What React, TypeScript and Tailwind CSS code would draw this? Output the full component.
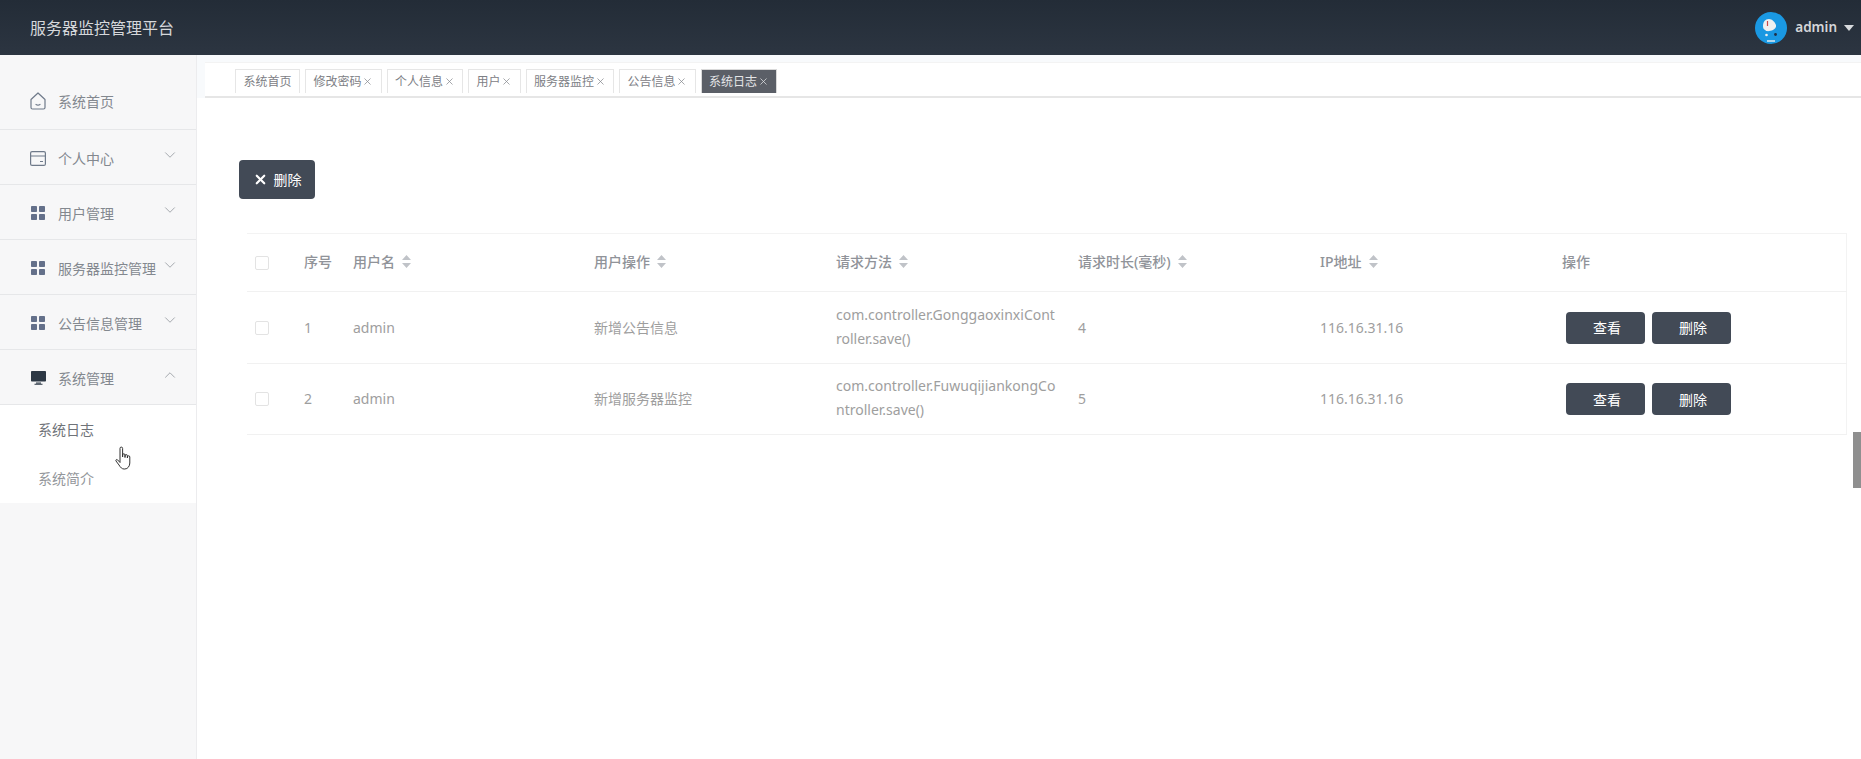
import React from 'react';
import { ChevronDown, ChevronUp, X } from 'lucide-react';

const TABS = [
  { label: '系统首页', closable: false },
  { label: '修改密码', closable: true },
  { label: '个人信息', closable: true },
  { label: '用户', closable: true },
  { label: '服务器监控', closable: true },
  { label: '公告信息', closable: true },
  { label: '系统日志', closable: true, active: true },
];

const ROWS = [
  { id: 1, user: 'admin', op: '新增公告信息', method: 'com.controller.GonggaoxinxiController.save()', time: 4, ip: '116.16.31.16' },
  { id: 2, user: 'admin', op: '新增服务器监控', method: 'com.controller.FuwuqijiankongController.save()', time: 5, ip: '116.16.31.16' },
];

function HomeIcon() {
  return (
    <svg width="16" height="18" viewBox="0 0 16 18" fill="none" stroke="#6f7a8a" strokeWidth="1.2">
      <path d="M1 7.5 8 1l7 6.5V15.5a1.5 1.5 0 0 1-1.5 1.5h-11A1.5 1.5 0 0 1 1 15.5z" strokeLinejoin="round" />
      <path d="M6 12.5c1 .7 3 .7 4 0" strokeLinecap="round" />
    </svg>
  );
}

function CardIcon() {
  return (
    <svg width="16" height="15" viewBox="0 0 16 15" fill="none" stroke="#6f7a8a" strokeWidth="1.2">
      <rect x="0.6" y="0.6" width="14.8" height="13.8" rx="1.5" />
      <path d="M1 5h14M10 10.5h3" />
    </svg>
  );
}

function GridIcon() {
  return (
    <svg width="14" height="14" viewBox="0 0 14 14" fill="#64708a">
      <rect width="6" height="6" rx="0.8" />
      <rect x="8" width="6" height="6" rx="0.8" />
      <rect y="8" width="6" height="6" rx="0.8" />
      <rect x="8" y="8" width="6" height="6" rx="0.8" />
    </svg>
  );
}

function MonitorIcon() {
  return (
    <svg width="15" height="14" viewBox="0 0 15 14" fill="#2d3845">
      <rect width="15" height="10.5" rx="0.8" />
      <path d="M5 11.5h5v1H5zM3.5 12.8h8v1h-8z" />
    </svg>
  );
}

function SortIcon() {
  return (
    <svg width="9" height="13" viewBox="0 0 9 13" fill="#c0c3c8" className="ml-[7px] inline-block align-[-1px]">
      <path d="M4.5 0 9 5H0zM4.5 13 0 8h9z" />
    </svg>
  );
}

function Avatar() {
  return (
    <svg width="32" height="32" viewBox="0 0 32 32">
      <circle cx="16" cy="16" r="16" fill="#1a98e2" />
      <path d="M8 14c0-4 2-7 6-7 3 0 6 3 7 6 .5 2-1 4-3 5-3 1-6 2-8 0-1.500-1-2-2-2-4z" fill="#f0f0f0" />
      <path d="M12.500 9v5" stroke="#c94a4a" strokeWidth="1.2" />
      <circle cx="11.500" cy="23" r="1.300" fill="#f0f0f0" />
      <circle cx="20.500" cy="22.500" r="1.400" fill="#1f2f45" />
      <path d="M12 29h8" stroke="#f0f0f0" strokeWidth="1.400" />
    </svg>
  );
}

function MenuItem({ icon, label, chevron, first }: { icon: React.ReactNode; label: string; chevron?: 'down' | 'up'; first?: boolean }) {
  return (
    <div className={`flex h-[55px] items-center border-b border-[#e6e7e9] pl-[30px] pr-[17px] ${first ? 'pb-[2px]' : 'pt-[2px]'}`}>
      <span className="flex w-[16px] justify-center">{icon}</span>
      <span className="ml-[12px] flex-1 text-[14px] text-[#83888f]">{label}</span>
      {chevron === 'down' && <ChevronDown size={18} strokeWidth={1} className="mb-[6px] text-[#8a8f96]" />}
      {chevron === 'up' && <ChevronUp size={18} strokeWidth={1} className="mb-[6px] text-[#8a8f96]" />}
    </div>
  );
}

function Checkbox() {
  return <span className="block h-[14px] w-[14px] rounded-[2px] border border-[#e3e3e3] bg-white" />;
}

function DarkButton({ children }: { children: React.ReactNode }) {
  return (
    <button className="h-[32px] w-[79px] rounded-[4px] bg-[#424a56] pl-[3px] text-[14px] text-white">{children}</button>
  );
}

export default function App() {
  return (
    <div className="relative flex h-screen w-full flex-col overflow-hidden bg-white font-['Noto_Sans','Noto_Sans_CJK_SC',sans-serif]">
      {/* Header */}
      <header className="flex h-[55px] shrink-0 items-center justify-between bg-gradient-to-b from-[#232c37] to-[#2c3541] pl-[30px] pr-[7px]">
        <h1 className="text-[16px] font-normal text-[#d6d8db]">服务器监控管理平台</h1>
        <div className="flex items-center">
          <Avatar />
          <span className="ml-[8px] text-[13.5px] font-semibold text-[#d4d6d9]">admin</span>
          <svg width="10" height="6" viewBox="0 0 10 6" fill="#d8dadd" className="ml-[7px]">
            <path d="M0 0h10L5 6z" />
          </svg>
        </div>
      </header>

      <div className="flex min-h-0 flex-1">
        {/* Sidebar */}
        <aside className="w-[197px] shrink-0 border-r border-[#ececee] bg-[#f7f7f8] pt-[20px]">
          <MenuItem first icon={<HomeIcon />} label="系统首页" />
          <MenuItem icon={<CardIcon />} label="个人中心" chevron="down" />
          <MenuItem icon={<GridIcon />} label="用户管理" chevron="down" />
          <MenuItem icon={<GridIcon />} label="服务器监控管理" chevron="down" />
          <MenuItem icon={<GridIcon />} label="公告信息管理" chevron="down" />
          <MenuItem icon={<MonitorIcon />} label="系统管理" chevron="up" />
          <div className="bg-white text-[14px]">
            <div className="flex h-[49px] items-center pl-[38px] text-[#6f7379]">系统日志</div>
            <div className="flex h-[49px] items-center pl-[38px] text-[#93969b]">系统简介</div>
          </div>
        </aside>

        {/* Main */}
        <main className="min-w-0 flex-1">
          <div className="bg-[#f8fafc] pt-[7px]">
            <div className="ml-[8px] flex h-[36px] gap-[5px] border-b-2 border-[#e6e6e6] border-t border-t-[#f3f3f3] bg-white pl-[30px] pt-[6px]">
              {TABS.map((tab) => (
                <div
                  key={tab.label}
                  className={`flex h-[24px] items-center border border-b-0 px-[7.5px] text-[12px] ${
                    tab.active ? 'border-b border-[#d9d9d9] bg-[#5b5f67] text-[#e4e5e7]' : 'border-[#e6e6e6] bg-white text-[#7d8085]'
                  }`}
                >
                  {tab.label}
                  {tab.closable && <X size={11} strokeWidth={1.6} className={tab.active ? 'ml-[0.5px] text-[#e4e5e7]' : 'ml-[0.5px] text-[#85888d]'} />}
                </div>
              ))}
            </div>
          </div>

          <div className="pl-[42px] pt-[62px]">
            <button className="flex h-[39px] w-[76px] items-center justify-center gap-[6px] rounded-[4px] bg-[#424a56] text-[14px] text-white">
              <X size={15} strokeWidth={3.5} />
              删除
            </button>
          </div>

          <table className="ml-[50px] mt-[34px] w-[1600px] table-fixed border-collapse border-r border-t border-[#f3f3f3] text-[14px] text-[#9e9e9e]">
            <colgroup>
              <col className="w-[48px]" />
              <col className="w-[49px]" />
              <col className="w-[242px]" />
              <col className="w-[242px]" />
              <col className="w-[242px]" />
              <col className="w-[242px]" />
              <col className="w-[242px]" />
              <col />
            </colgroup>
            <thead>
              <tr className="h-[58px] border-b border-[#f1f1f1] text-left text-[14px] text-[#909399]">
                <th className="pl-[8px] font-medium"><Checkbox /></th>
                <th className="pb-[2px] pl-[9px] font-medium">序号</th>
                <th className="pb-[2px] pl-[9px] font-medium">用户名<SortIcon /></th>
                <th className="pb-[2px] pl-[8px] font-medium">用户操作<SortIcon /></th>
                <th className="pb-[2px] pl-[8px] font-medium">请求方法<SortIcon /></th>
                <th className="pb-[2px] pl-[8px] font-medium">请求时长(毫秒)<SortIcon /></th>
                <th className="pb-[2px] pl-[8px] font-medium">IP地址<SortIcon /></th>
                <th className="pb-[2px] pl-[8px] font-medium">操作</th>
              </tr>
            </thead>
            <tbody>
              {ROWS.map((row, i) => (
                <tr key={row.id} className={`border-b border-[#f1f1f1] ${i === 0 ? 'h-[72px]' : 'h-[71px]'}`}>
                  <td className="pl-[8px]"><Checkbox /></td>
                  <td className="pb-[1px] pl-[9px]">{row.id}</td>
                  <td className="pb-[1px] pl-[9px]">{row.user}</td>
                  <td className="pb-[1px] pl-[8px]">{row.op}</td>
                  <td className="break-all pb-[2px] pl-[8px] pr-[12px] leading-[24px]">{row.method}</td>
                  <td className="pb-[1px] pl-[8px]">{row.time}</td>
                  <td className="pb-[1px] pl-[8px]">{row.ip}</td>
                  <td className="pl-[12px]">
                    <div className="flex gap-[7px]">
                      <DarkButton>查看</DarkButton>
                      <DarkButton>删除</DarkButton>
                    </div>
                  </td>
                </tr>
              ))}
            </tbody>
          </table>
        </main>
      </div>

      {/* scrollbar thumb */}
      <div className="absolute right-0 top-[432px] h-[56px] w-[8px] bg-[#8f8f8f]" />
      {/* mouse cursor */}
      <svg width="18" height="25" viewBox="0 0 18 25" className="absolute left-[115px] top-[446px]" fill="white" stroke="#333" strokeWidth="1" strokeLinejoin="round">
        <path d="M5 16.500V2.400a1.300 1.300 0 0 1 2.600 0V11V9a1.200 1.200 0 0 1 2.400 0v2.500V9.800a1.200 1.200 0 0 1 2.400 0V12v-1a1.200 1.200 0 0 1 2.400 0v6c0 3-2 6-5 6H9c-2 0-3.500-1.500-5-4l-3-4c-.6-1 .6-2 1.500-1.200z" />
      </svg>
    </div>
  );
}
